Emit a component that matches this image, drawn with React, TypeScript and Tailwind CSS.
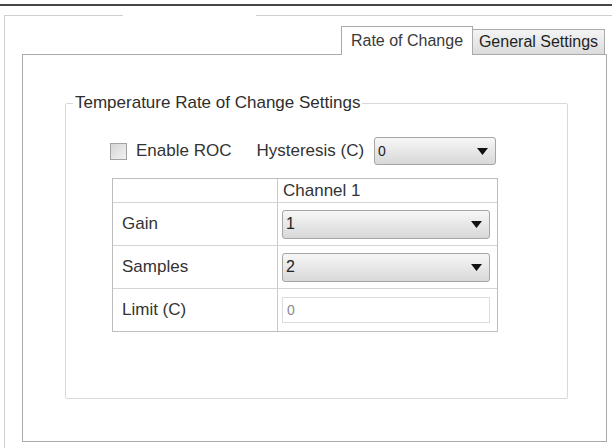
function Arrow() {
  return (
    <svg width="11" height="7" viewBox="0 0 11 7" className="shrink-0">
      <path d="M0 0h11L5.5 7z" fill="#111" />
    </svg>
  );
}

function Combo({ value, className }: { value: string; className: string }) {
  return (
    <div
      className={`flex items-center justify-between rounded-[3px] border border-[#a5a5a5] bg-linear-to-b from-[#f7f7f7] to-[#d8d8d8] pl-[3px] pr-[7px] text-[#222] ${className}`}
    >
      <span>{value}</span>
      <Arrow />
    </div>
  );
}

function Row({ label, last, children }: { label: string; last?: boolean; children: React.ReactNode }) {
  return (
    <div className={`flex ${last ? "h-[42px]" : "h-[43px] border-b border-[#d3d3d3]"}`}>
      <div className="flex w-[165px] items-center border-r border-[#c9c9c9] pl-[9px]">{label}</div>
      <div className="flex flex-1 items-center pl-[4px] pr-[7px]">{children}</div>
    </div>
  );
}

export default function App() {
  return (
    <div className="h-[448px] w-[612px] overflow-hidden bg-white pt-[4px] font-['Liberation_Sans',Arial,sans-serif] text-[#333]">
      <div className="h-[2px] bg-[#474747]" />

      <fieldset className="ml-[4px] mt-[9px] h-[440px] border-l border-t border-[#d0d0d0]">
        <legend className="ml-[118px] h-0 w-[133px]" />

        <div className="ml-[17px] w-[585px] pt-[10px]">
          {/* tabs */}
          <div className="relative z-10 -mb-px flex items-end justify-end pr-[2px] text-[16px]">
            <div className="flex h-[29px] w-[132px] items-center justify-center border border-b-0 border-[#aaaaaa] bg-white text-[#3a3a3a]">
              Rate of Change
            </div>
            <div className="mb-px flex h-[25px] w-[132px] items-center justify-center border border-b-0 border-l-0 border-[#aaaaaa] bg-linear-to-b from-[#f4f4f4] to-[#dcdcdc] text-[#1f1f1f]">
              General Settings
            </div>
          </div>

          {/* tab page */}
          <div className="h-[388px] border border-[#aaaaaa] bg-white pt-[38px]">
            <fieldset className="ml-[42px] h-[306px] w-[503px] rounded-[2px] border border-[#d9d9d9]">
              <legend className="ml-[7px] px-[2px] text-[17px] leading-[20px] text-[#2e2e2e]">
                Temperature Rate of Change Settings
              </legend>

              <div className="mt-[24px] flex h-[28px] items-center pl-[44px] text-[17px]">
                <div className="h-[17px] w-[17px] border border-[#a3a3a3] bg-linear-to-br from-[#d6d6d6] to-[#f2f2f2]" />
                <span className="ml-[9px]">Enable ROC</span>
                <span className="ml-[25px]">Hysteresis (C)</span>
                <Combo value="0" className="ml-[10px] h-[28px] w-[122px] text-[14px]" />
              </div>

              <div className="ml-[46px] mt-[13px] w-[386px] border border-[#bdbdbd] text-[17px]">
                <div className="flex h-[24px] border-b border-[#d3d3d3]">
                  <div className="w-[165px] border-r border-[#c9c9c9]" />
                  <div className="flex flex-1 items-center pl-[5px]">Channel 1</div>
                </div>
                <Row label="Gain">
                  <Combo value="1" className="h-[29px] w-full text-[16px]" />
                </Row>
                <Row label="Samples">
                  <Combo value="2" className="h-[29px] w-full text-[16px]" />
                </Row>
                <Row label="Limit (C)" last>
                  <div className="flex h-[26px] w-full items-center border border-[#dcdcdc] bg-white pl-[4px] text-[14px] text-[#8a8a8a]">
                    0
                  </div>
                </Row>
              </div>
            </fieldset>
          </div>
        </div>
      </fieldset>
    </div>
  );
}
